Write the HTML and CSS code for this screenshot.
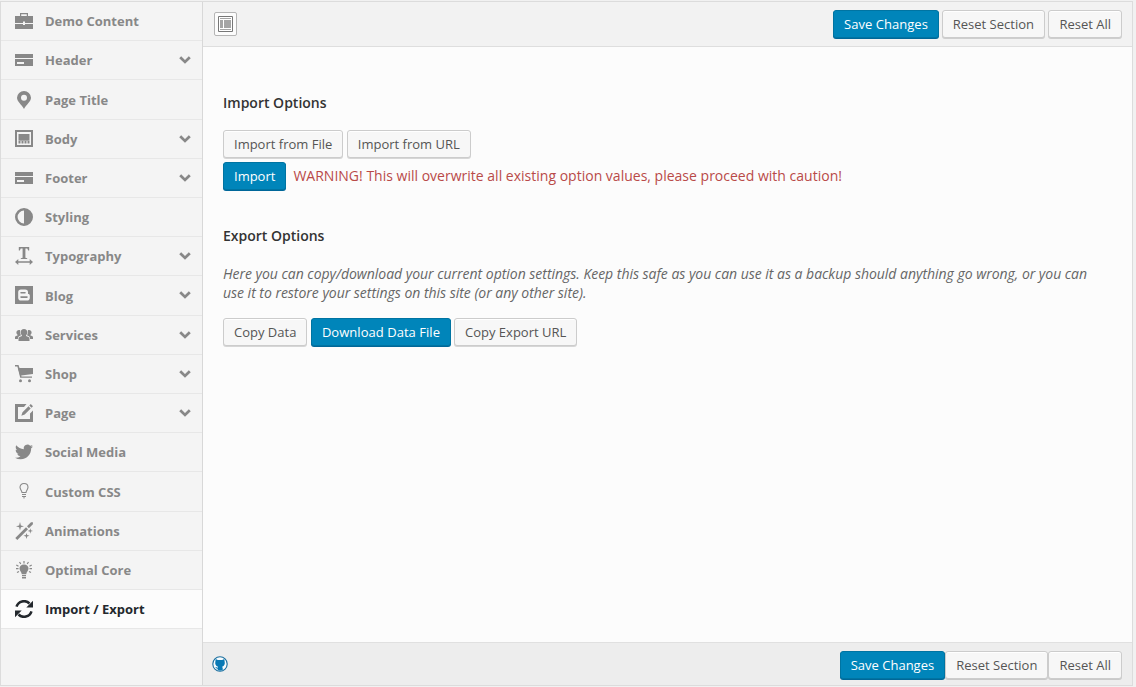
FILE: index.html
```html
<!DOCTYPE html>
<html lang="en">
<head>
<meta charset="utf-8">
<title>Import / Export</title>
<link rel="stylesheet" href="styles.css">
</head>
<body>
<svg class="sprite" xmlns="http://www.w3.org/2000/svg">
  <symbol id="bars" viewBox="0 0 18 18"><path d="M0 3h18v4H0zM0 8h18v7H0zM2 11v2h7v-2z" fill-rule="evenodd"/></symbol>
  <symbol id="chevron" viewBox="0 0 12 8"><path d="M1.2 1.2 6 5.9 10.8 1.2" fill="none" stroke="currentColor" stroke-width="2.8"/></symbol>
</svg>
<div class="panel">
  <ul class="menu">
    <li class="item"><svg class="icon" viewBox="0 0 18 18"><path d="M5 4V1h8v3h5v7h-8V9.500H8V11H0V4zM6.200 2.200V4h5.600V2.200zM0 12h8v1h2v-1h8v5H0z" fill-rule="evenodd"/></svg><span class="label">Demo Content</span></li>
    <li class="item"><svg class="icon"><use href="#bars"/></svg><span class="label">Header</span><svg class="chevron"><use href="#chevron"/></svg></li>
    <li class="item"><svg class="icon" viewBox="0 0 18 18"><path d="M9 0a7 7 0 0 1 7 6.800C16 10.500 11.500 13.500 9 18 6.500 13.500 2 10.500 2 6.800A7 7 0 0 1 9 0zM9 3.800a3 3 0 1 0 0 6 3 3 0 0 0 0-6z" fill-rule="evenodd"/></svg><span class="label">Page Title</span></li>
    <li class="item"><svg class="icon" viewBox="0 0 18 18"><path d="M0 0h18v17H0zM2 2v13h14V2zM3.500 4h11v6h-11zM3.500 11h2v2.500h-2zM6.500 11h2v2.500h-2zM9.500 11h2v2.500h-2zM12.500 11h2v2.500h-2z" fill-rule="evenodd"/><path d="M3.500 10h11v1h-11z" opacity=".7"/></svg><span class="label">Body</span><svg class="chevron"><use href="#chevron"/></svg></li>
    <li class="item"><svg class="icon"><use href="#bars"/></svg><span class="label">Footer</span><svg class="chevron"><use href="#chevron"/></svg></li>
    <li class="item"><svg class="icon" viewBox="0 0 18 18"><path d="M9 0a9 9 0 1 1 0 18A9 9 0 0 1 9 0zM9 2.600a6.400 6.400 0 0 0 0 12.800z" fill-rule="evenodd"/></svg><span class="label">Styling</span></li>
    <li class="item"><svg class="icon" viewBox="0 0 18 18"><path d="M3.800 0h10.400v3.600h-1L12.300 1.500h-1.900v9.300l1.800.4v.8H5.800v-.8l1.800-.4V1.500H5.700l-.9 2.100h-1zM0 15l3.300-3v2.200h11.400V12L18 15l-3.300 3v-2.200H3.300V18z"/></svg><span class="label">Typography</span><svg class="chevron"><use href="#chevron"/></svg></li>
    <li class="item"><svg class="icon" viewBox="0 0 18 18"><path d="M0 0h18v18H0zM6 3.500A2.800 2.800 0 0 0 3.200 6.300v5.400A2.800 2.800 0 0 0 6 14.500h6a2.800 2.800 0 0 0 2.800-2.800V9.500c0-1-.6-1.500-1.800-1.500V6.300a2.800 2.800 0 0 0-2.800-2.800zM6 6h4a.7.7 0 0 1 0 1.500H6A.7.7 0 0 1 6 6zM6 10.300h6a.8.8 0 0 1 0 1.600H6a.8.8 0 0 1 0-1.600z" fill-rule="evenodd"/></svg><span class="label">Blog</span><svg class="chevron"><use href="#chevron"/></svg></li>
    <li class="item"><svg class="icon" viewBox="0 0 18 18"><path d="M9 3c2.200 0 3.300 1.300 3.300 3.200 0 1.400-.5 2.400-1.200 3v.9l2.300 1c.8.400 1.100 1 1.100 1.800V15h-11v-2.100c0-.8.300-1.400 1.100-1.800l2.300-1v-.9c-.7-.6-1.200-1.600-1.200-3C5.700 4.300 6.800 3 9 3z"/><path d="M4 4c.6 0 1 .1 1.200.4-.2 1.900 0 3.600.8 4.900l-1.900.9C3.200 10.700 2.900 11.800 2.900 13H0v-1.400c0-.8.3-1.200 1-1.500l1.500-.7v-.7C1.900 8.300 1.400 7.500 1.400 6.500 1.400 5 2.500 4 4 4zM14 4c-.6 0-1 .1-1.200.4.2 1.900 0 3.600-.8 4.900l1.900.9c.9.500 1.200 1.600 1.200 2.800H18v-1.400c0-.8-.3-1.200-1-1.500l-1.500-.7v-.7c.6-.4 1.100-1.200 1.100-2.200C16.600 5 15.500 4 14 4z"/></svg><span class="label">Services</span><svg class="chevron"><use href="#chevron"/></svg></li>
    <li class="item"><svg class="icon" viewBox="0 0 18 18"><path d="M0 0h3.500l1 3H18v6L6.200 10.500l.3.900H17v1.300H5.200L2.400 1.600H0z"/><path d="M3 3h3v7H5z"/><circle cx="5.500" cy="15.700" r="1.500"/><circle cx="14.500" cy="15.700" r="1.500"/></svg><span class="label">Shop</span><svg class="chevron"><use href="#chevron"/></svg></li>
    <li class="item"><svg class="icon" viewBox="0 0 18 18"><path d="M0 0h11.500L9 3H3v12h12V9.500L18 6.500V18H0zM15.800 0 18 2.200l-1.500 1.500-2.200-2.200zM13.500 2.300l2.200 2.200-6 6-3.400 1.300L7.500 8.300z"/></svg><span class="label">Page</span><svg class="chevron"><use href="#chevron"/></svg></li>
    <li class="item"><svg class="icon" viewBox="0 0 24 24"><path d="M23.950 4.570a10 10 0 0 1-2.820.77 4.960 4.960 0 0 0 2.160-2.720c-.95.550-2 .950-3.130 1.180a4.920 4.920 0 0 0-8.380 4.480C7.690 8.090 4.070 6.130 1.640 3.160a4.820 4.820 0 0 0-.67 2.480c0 1.710.87 3.210 2.190 4.090a4.900 4.900 0 0 1-2.230-.61v.06a4.920 4.920 0 0 0 3.950 4.830 5 5 0 0 1-2.210.08 4.940 4.940 0 0 0 4.600 3.420A9.870 9.870 0 0 1 0 19.540a14 14 0 0 0 7.550 2.210c9.050 0 14-7.500 14-13.980 0-.21 0-.42-.02-.63a9.940 9.940 0 0 0 2.420-2.570z"/></svg><span class="label">Social Media</span></li>
    <li class="item"><svg class="icon icon-raised" viewBox="0 0 18 18"><path d="M9 1.500c2.500 0 4 1.600 4 3.800 0 2-1.700 3-2 5.200H7C6.700 8.300 5 7.300 5 5.300c0-2.200 1.500-3.800 4-3.800z" fill="none" stroke="currentColor" stroke-width="1.100"/><path d="M7 12h4v1.100H7zM7 14h4v1.100H7zM8 15.500h2v.8H8z"/></svg><span class="label">Custom CSS</span></li>
    <li class="item"><svg class="icon" viewBox="0 0 18 18"><path d="M.3 15.900 11 5.200l2 2L2.300 17.900zM12 4.200l4-4h1.900v2l-4 4zM5 0l.9 3.400L9 4.300l-3.100.9L5 8.500l-.9-3.300L1 4.300l3.100-.9zM15.300 6.300l.6 2 2.100.7-2.100.6-.6 2.100-.6-2.100-2.100-.6 2.100-.7zM11.500 11l.7 2 2.300.7-2.300.7-.7 2.600-.7-2.600-2.300-.7 2.300-.7z"/></svg><span class="label">Animations</span></li>
    <li class="item"><svg class="icon" viewBox="0 0 18 18"><path d="M9 3.500c2.900 0 4.500 1.800 4.500 4 0 2.200-1.900 3.200-2.300 5.700H6.800c-.4-2.500-2.300-3.500-2.300-5.700 0-2.200 1.600-4 4.500-4zM7 14h4v1.200H7zM7 16h4v1.500H7z"/><path d="M9 0v2.500M4.500 1l1.300 2M13.500 1l-1.300 2M1.300 4l2.200 1.300M16.700 4l-2.200 1.300M1 7.700h2.500M14.500 7.700H17M2 11.500l2-1M16 11.500l-2-1" fill="none" stroke="currentColor" stroke-width="1.200"/></svg><span class="label">Optimal Core</span></li>
    <li class="item item-active"><svg class="icon" viewBox="0 0 18 18"><path d="M1.500 6.700A7.800 7.800 0 0 1 14.500 3.500M16.500 11.300A7.800 7.800 0 0 1 3.500 14.500" fill="none" stroke="currentColor" stroke-width="2.500"/><path d="M18 .7v6.700h-6.700zM0 17.300v-6.700h6.700z"/></svg><span class="label">Import / Export</span></li>
  </ul>
  <main class="main">
    <header class="bar">
      <button class="expand" aria-label="Expand"><svg class="expand-icon" viewBox="0 0 15 16"><path d="M.5.5h14v15H.5z" fill="#fff" stroke="#777"/><path d="M2 2h11v1H2zM2 4h3v8H2zM6 4h7v8H6zM2 13h11v1H2z" fill="#a5a5a5"/></svg></button>
      <div class="actions">
        <button class="button primary wide">Save Changes</button>
        <button class="button">Reset Section</button>
        <button class="button">Reset All</button>
      </div>
    </header>
    <section class="content">
      <h4 class="heading">Import Options</h4>
      <div class="row row-import">
        <button class="button">Import from File</button>
        <button class="button">Import from URL</button>
      </div>
      <div class="row">
        <button class="button primary">Import</button>
        <span class="warning">WARNING! This will overwrite all existing option values, please proceed with caution!</span>
      </div>
      <h4 class="heading heading-export">Export Options</h4>
      <p class="description">Here you can copy/download your current option settings. Keep this safe as you can use it as a backup should anything go wrong, or you can use it to restore your settings on this site (or any other site).</p>
      <div class="row">
        <button class="button">Copy Data</button>
        <button class="button primary wide">Download Data File</button>
        <button class="button">Copy Export URL</button>
      </div>
    </section>
    <footer class="bar bar-bottom">
      <svg class="github" viewBox="0 0 16 16"><circle cx="8" cy="8" r="7.200" fill="#f7fbfd" stroke="#1b6f9f" stroke-width="1.100"/><path d="M3.700 3l2.100.9h4.400l2.100-.9.300 2.200c.7 2.900-.3 4.900-2.500 5.500l.6 1.200v2.200L8 14.700l-2.300-.6v-1.400c-1.500.2-1.700-1-2.500-1.700 1.200-.1 1.500.9 2.500.7l.3-1c-2.200-.6-3.300-2.600-2.600-5.500z" fill="#0879b5"/></svg>
      <div class="actions actions-tight">
        <button class="button primary">Save Changes</button>
        <button class="button">Reset Section</button>
        <button class="button">Reset All</button>
      </div>
    </footer>
  </main>
</div>
</body>
</html>
```
FILE: styles.css
```css
* { box-sizing: border-box; }
body {
  margin: 0;
  height: 687px;
  padding: 1px 3px 1px 0;
  overflow: hidden;
  background: #f1f1f1;
  color: #555;
  font-family: "Open Sans", sans-serif;
  font-size: 13px;
}
.sprite { display: none; }
.panel {
  display: flex;
  height: 685px;
  border: 1px solid #dcdcdc;
  background: #f4f4f4;
}
.menu {
  flex: none;
  width: 201px;
  margin: 0;
  padding: 0.080px 0 0;
  list-style: none;
}
.item {
  display: flex;
  align-items: center;
  height: 39.200px;
  padding: 0 11px 0 14px;
  border-bottom: 1px solid #e7e7e7;
  color: #888;
  font-weight: 700;
  line-height: 18px;
}
.item-active { background: #fcfcfc; color: #23282d; }
.label { padding-top: 0.200px; }
.icon {
  flex: none;
  width: 18px;
  height: 18px;
  margin-right: 12px;
  fill: currentColor;
}
.chevron { width: 12px; height: 8px; margin-left: auto; }
.main {
  display: flex;
  flex: 1;
  flex-direction: column;
  border-left: 1px solid #d8d8d8;
  background: #fcfcfc;
}
.bar {
  display: flex;
  align-items: flex-start;
  justify-content: space-between;
  height: 45px;
  padding: 8px 10px 0 11px;
  border-bottom: 1px solid #dedede;
  background: #f2f2f2;
}
.bar-bottom {
  height: 43px;
  padding-left: 9.400px;
  border-top: 1px solid #e0e0e0;
  border-bottom: 0;
  background: #ededed;
}
.actions { display: flex; gap: 3.400px; }
.actions-tight { gap: 0; }
.button {
  height: 28px;
  padding: 0 10px 1px;
  border: 1px solid #ccc;
  border-radius: 3px;
  background: #f7f7f7;
  box-shadow: inset 0 1px 0 #fff, 0 1px 0 rgba(0, 0, 0, .15);
  color: #555;
  font: 13px/26px "Open Sans", sans-serif;
  white-space: nowrap;
}
.primary {
  border-color: #0074a2;
  background: #0085ba;
  box-shadow: 0 1px 0 #006799;
  color: #fff;
}
.wide { margin-right: -0.500px; letter-spacing: 0.040px; }
.expand {
  display: flex;
  align-items: center;
  justify-content: center;
  width: 23px;
  height: 24px;
  margin-top: 2px;
  padding: 0;
  border: 1px solid #b5b5b5;
  border-radius: 2px;
  background: #fcfcfc;
}
.expand-icon { width: 15px; height: 16px; }
.content { flex: 1; padding: 47px 20px 0; }
.heading {
  margin: 0 0 18px;
  color: #333;
  font-size: 14px;
  font-weight: 600;
  line-height: 18px;
}
.heading-export { margin: 37px 0 19px; }
.row { display: flex; gap: 3.500px; }
.row-import { margin-bottom: 4px; }
.warning {
  margin-left: 3.500px;
  color: #b94a48;
  font-size: 14px;
  letter-spacing: 0.007px;
  line-height: 27px;
}
.description {
  max-width: 875px;
  margin: 0 0 16px;
  color: #666;
  font-size: 14px;
  font-style: italic;
  letter-spacing: -0.023px;
  line-height: 19px;
}
.github { width: 16px; height: 16px; margin-top: 5px; }
.icon-raised { margin-bottom: 0.100px; }
```
